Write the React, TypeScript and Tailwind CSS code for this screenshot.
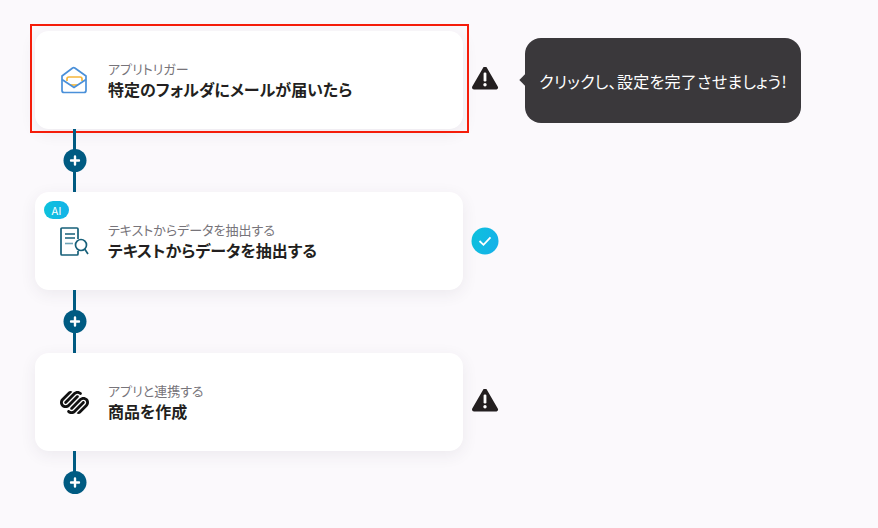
import { SiSquarespace } from 'react-icons/si';

const FONT = "font-['Noto_Sans_CJK_JP','Noto_Sans',sans-serif]";

function WarningIcon() {
  return (
    <svg width="28" height="26" viewBox="0 1 28 26">
      <path
        d="M14 2.5 L25 21.5 H3 Z"
        fill="#231f20"
        stroke="#231f20"
        strokeWidth="4"
        strokeLinejoin="round"
      />
      <rect x="12.6" y="6.5" width="2.8" height="9" rx="1.2" fill="#fff" />
      <circle cx="14" cy="18.8" r="1.7" fill="#fff" />
    </svg>
  );
}

function CheckIcon() {
  return (
    <svg width="28" height="28" viewBox="0 0 28 28">
      <defs>
        <linearGradient id="chk" x1="0" y1="0" x2="1" y2="0.3">
          <stop offset="0" stopColor="#0dc2dc" />
          <stop offset="1" stopColor="#14b2e8" />
        </linearGradient>
      </defs>
      <circle cx="14" cy="14" r="13.5" fill="url(#chk)" />
      <path d="M8.5 14 L12.5 17.8 L19.5 10.4" fill="none" stroke="#fff" strokeWidth="1.8" />
    </svg>
  );
}

function MailIcon() {
  return (
    <svg width="28" height="28" viewBox="0 0 28 28" fill="none">
      <path d="M7 15 V13 Q7 11 9 11 H20 Q22 11 22 13 V15" stroke="#f6b73c" strokeWidth="1.7" />
      <path d="M10 19 H18" stroke="#f6b73c" strokeWidth="1.7" />
      <path
        d="M2 10 L12.6 2 Q13.7 1.3 14.8 2 L26 10 V24.5 Q26 26.5 24 26.5 H4 Q2 26.5 2 24.5 Z"
        stroke="#4a90d9"
        strokeWidth="1.7"
        strokeLinejoin="round"
      />
      <path d="M2 13.5 L14 21.5 L26 13.5" stroke="#4a90d9" strokeWidth="1.7" />
    </svg>
  );
}

function DocSearchIcon() {
  return (
    <svg width="30" height="32" viewBox="0 0 30 32" fill="none">
      <path
        d="M19 14 V4 Q19 3 18 3 H3 Q2 3 2 4 V29 Q2 30 3 30 H18 Q19 30 19 29 V26"
        stroke="#17607a"
        strokeWidth="1.7"
      />
      <path d="M6 9 H16 M6 13 H16" stroke="#17607a" strokeWidth="1.4" />
      <path d="M6 18.5 H14" stroke="#6fa5b8" strokeWidth="1.6" />
      <circle cx="22" cy="20" r="5.5" fill="#fff" stroke="#17607a" strokeWidth="1.7" />
      <path d="M25.8 24.2 L29 29" stroke="#17607a" strokeWidth="1.7" />
    </svg>
  );
}

function Connector({ height = 'h-[63px]' }: { height?: string }) {
  return (
    <div className={`relative ml-[38px] w-[3px] bg-[#005b82] ${height}`}>
      <div className="absolute left-1/2 top-[20px] flex h-[23px] w-[23px] -translate-x-1/2 items-center justify-center rounded-full bg-[#005b82]">
        <svg width="11" height="11" viewBox="0 0 11 11">
          <path d="M5.5 1.5 V9.5 M1.5 5.5 H9.5" stroke="#fff" strokeWidth="2.4" strokeLinecap="round" />
        </svg>
      </div>
    </div>
  );
}

interface StepProps {
  icon: React.ReactNode;
  label: string;
  title: string;
  status: React.ReactNode;
  ai?: boolean;
  children?: React.ReactNode;
}

function Step({ icon, label, title, status, ai, children }: StepProps) {
  return (
    <div className="flex items-center">
      <div className="relative flex h-[98px] w-[428px] items-center rounded-[14px] bg-white pl-[24px] shadow-[0_4px_16px_rgba(60,50,80,0.08)]">
        {ai && (
          <span className="absolute left-[9px] top-[9px] flex h-[18px] w-[25px] items-center justify-center rounded-full bg-gradient-to-r from-[#0dc2dc] to-[#14b2e8] text-[11px] leading-none text-white">
            AI
          </span>
        )}
        <div className="flex w-[30px] items-center justify-center">{icon}</div>
        <div className="ml-[19px] mt-[1px] flex flex-col [font-feature-settings:'palt']">
          <span className="text-[13px] leading-[16px] text-[#77747a]">{label}</span>
          <span className="mt-[1px] text-[16px] font-bold leading-[22px] text-[#231f20]">{title}</span>
        </div>
        {children}
      </div>
      <div className="ml-[8px] flex w-[28px] items-center justify-center">{status}</div>
    </div>
  );
}

export default function App() {
  return (
    <div className={`${FONT} h-[528px] w-[878px] overflow-hidden bg-[#fbf9fc] pl-[35px] pt-[31px]`}>
      <Step icon={<MailIcon />} label="アプリトリガー" title="特定のフォルダにメールが届いたら" status={<WarningIcon />}>
        <div className="pointer-events-none absolute -left-[5px] -top-[7px] h-[109px] w-[439px] border-2 border-[#f51d0a]" />
        <div className="absolute left-[490px] top-[7px] flex h-[85px] w-[276px] items-center justify-center rounded-2xl bg-[#3a383b] text-[16px] tracking-[0.3px] text-white [font-feature-settings:'palt']">
          <span className="absolute -left-[4px] top-[38px] h-[8px] w-[8px] rotate-45 bg-[#3a383b]" />
          クリックし、設定を完了させましょう!
        </div>
      </Step>
      <Connector />
      <Step icon={<DocSearchIcon />} label="テキストからデータを抽出する" title="テキストからデータを抽出する" status={<CheckIcon />} ai />
      <Connector />
      <Step icon={<SiSquarespace size={29} color="#111" />} label="アプリと連携する" title="商品を作成" status={<WarningIcon />} />
      <Connector height="h-[43px]" />
    </div>
  );
}
